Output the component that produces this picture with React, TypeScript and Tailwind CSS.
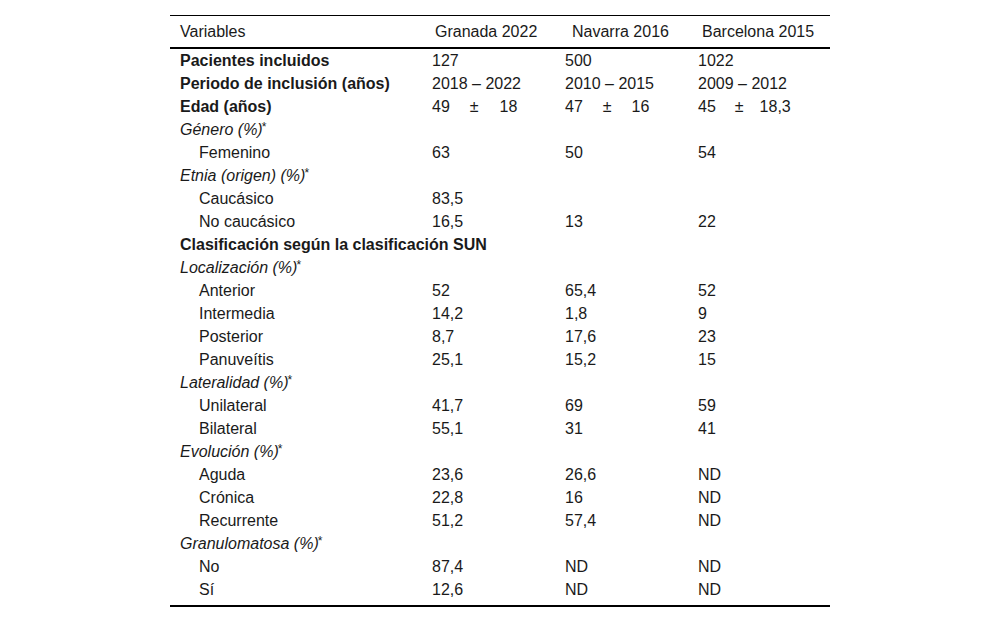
import React from "react";

type Cell = React.ReactNode;
type RowDef = { label: string; kind: "bold" | "italic" | "indent"; star?: boolean; vals?: Cell[] };

const PM = ({ a, b, g1, g2 }: { a: string; b: string; g1: string; g2: string }) => (
  <span className="whitespace-nowrap">
    {a}
    <span className={g1}>±</span>
    <span className={g2}>{b}</span>
  </span>
);

const rows: RowDef[] = [
  { label: "Pacientes incluidos", kind: "bold", vals: ["127", "500", "1022"] },
  { label: "Periodo de inclusión (años)", kind: "bold", vals: ["2018 – 2022", "2010 – 2015", "2009 – 2012"] },
  {
    label: "Edad (años)",
    kind: "bold",
    vals: [
      <PM a="49" b="18" g1="ml-[20px]" g2="ml-[21px]" />,
      <PM a="47" b="16" g1="ml-[20px]" g2="ml-[20px]" />,
      <PM a="45" b="18,3" g1="ml-[19px]" g2="ml-[16px]" />,
    ],
  },
  { label: "Género (%)", kind: "italic", star: true },
  { label: "Femenino", kind: "indent", vals: ["63", "50", "54"] },
  { label: "Etnia (origen) (%)", kind: "italic", star: true },
  { label: "Caucásico", kind: "indent", vals: ["83,5", "", ""] },
  { label: "No caucásico", kind: "indent", vals: ["16,5", "13", "22"] },
  { label: "Clasificación según la clasificación SUN", kind: "bold" },
  { label: "Localización (%)", kind: "italic", star: true },
  { label: "Anterior", kind: "indent", vals: ["52", "65,4", "52"] },
  { label: "Intermedia", kind: "indent", vals: ["14,2", "1,8", "9"] },
  { label: "Posterior", kind: "indent", vals: ["8,7", "17,6", "23"] },
  { label: "Panuveítis", kind: "indent", vals: ["25,1", "15,2", "15"] },
  { label: "Lateralidad (%)", kind: "italic", star: true },
  { label: "Unilateral", kind: "indent", vals: ["41,7", "69", "59"] },
  { label: "Bilateral", kind: "indent", vals: ["55,1", "31", "41"] },
  { label: "Evolución (%)", kind: "italic", star: true },
  { label: "Aguda", kind: "indent", vals: ["23,6", "26,6", "ND"] },
  { label: "Crónica", kind: "indent", vals: ["22,8", "16", "ND"] },
  { label: "Recurrente", kind: "indent", vals: ["51,2", "57,4", "ND"] },
  { label: "Granulomatosa (%)", kind: "italic", star: true },
  { label: "No", kind: "indent", vals: ["87,4", "ND", "ND"] },
  { label: "Sí", kind: "indent", vals: ["12,6", "ND", "ND"] },
];

export default function App() {
  return (
    <div
      className="w-[1000px] h-[622px] bg-white text-[#1a1a1a] text-[16px] leading-[23px]"
      style={{ fontFamily: '"Liberation Sans", Arial, Helvetica, sans-serif' }}
    >
      <div className="pt-[15px] flex justify-center">
        <div className="w-[660px] border-t border-t-black border-b-2 border-b-black pb-[4px]">
          <div className="grid grid-cols-[252px_133px_133px_142px] h-[33px] items-center border-b-2 border-b-black">
            <div className="pl-[10px]">Variables</div>
            <div className="pl-[13px]">Granada 2022</div>
            <div className="pl-[17px]">Navarra 2016</div>
            <div className="pl-[14px]">Barcelona 2015</div>
          </div>
          {rows.map((r, i) => (
            <div key={i} className="grid grid-cols-[252px_133px_133px_142px] h-[23px] items-center">
              <div
                className={
                  r.kind === "bold"
                    ? "pl-[10px] font-bold whitespace-nowrap"
                    : r.kind === "italic"
                    ? "pl-[10px] italic whitespace-nowrap"
                    : "pl-[29px] whitespace-nowrap"
                }
              >
                {r.label}
                {r.star && (
                  <span className="not-italic text-[12px] leading-none relative top-[-4px] ml-[-1px]">*</span>
                )}
              </div>
              {r.kind === "bold" && !r.vals ? null : (
                <>
                  <div className="pl-[10px]">{r.vals?.[0]}</div>
                  <div className="pl-[10px]">{r.vals?.[1]}</div>
                  <div className="pl-[10px]">{r.vals?.[2]}</div>
                </>
              )}
            </div>
          ))}
        </div>
      </div>
    </div>
  );
}
